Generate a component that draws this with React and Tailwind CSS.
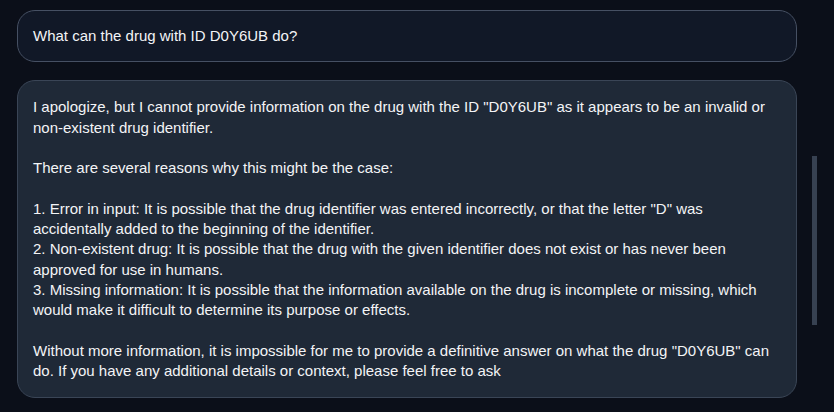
export default function App() {
  const paragraphs = [
    'I apologize, but I cannot provide information on the drug with the ID "D0Y6UB" as it appears to be an invalid or non-existent drug identifier.',
    'There are several reasons why this might be the case:',
    '1. Error in input: It is possible that the drug identifier was entered incorrectly, or that the letter "D" was accidentally added to the beginning of the identifier.\n2. Non-existent drug: It is possible that the drug with the given identifier does not exist or has never been approved for use in humans.\n3. Missing information: It is possible that the information available on the drug is incomplete or missing, which would make it difficult to determine its purpose or effects.',
    'Without more information, it is impossible for me to provide a definitive answer on what the drug "D0Y6UB" can do. If you have any additional details or context, please feel free to ask',
  ];

  return (
    <div
      className="relative h-[412px] w-[834px] overflow-hidden bg-[#0b0f19] pl-[17px] pr-[37px] pt-[10px] text-[15px] text-[#f3f4f6]"
      style={{ fontFamily: '"Liberation Sans", Arial, sans-serif' }}
    >
      {/* user message */}
      <div className="rounded-[18px] border border-[#465063] bg-[#111827] px-[15px] py-[15px] leading-[20.3px]">
        What can the drug with ID D0Y6UB do?
      </div>

      {/* bot message */}
      <div className="mt-[18px] rounded-[18px] border border-[#3a4556] bg-[#1f2937] px-[15px] py-[16px] leading-[20.3px]">
        {paragraphs.map((p, i) => (
          <p key={i} className={`whitespace-pre-line ${i > 0 ? 'mt-[20.3px]' : ''}`}>
            {p}
          </p>
        ))}
      </div>

      {/* scrollbar thumb */}
      <div className="absolute left-[812px] top-[156px] h-[169px] w-[5px] bg-[#374151]" />
    </div>
  );
}
